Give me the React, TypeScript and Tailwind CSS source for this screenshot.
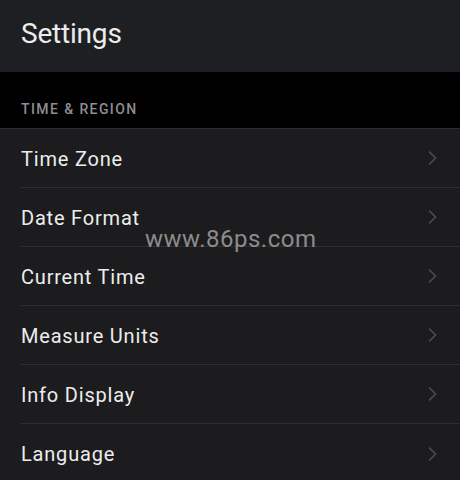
const items = ['Time Zone', 'Date Format', 'Current Time', 'Measure Units', 'Info Display', 'Language'];

function Chevron() {
  return (
    <svg width="12" height="16" viewBox="0 0 12 16" fill="none" className="text-[#4c4c4f]">
      <path d="M3 1.5 L9.5 8 L3 14.5" stroke="currentColor" strokeWidth="1.6" />
    </svg>
  );
}

export default function App() {
  return (
    <div
      className="relative w-[460px] h-[480px] overflow-hidden bg-[#1c1c1e]"
      style={{ fontFamily: 'Roboto, "Noto Sans", sans-serif' }}
    >
      {/* header */}
      <div className="h-[72px] flex items-center pl-[21px] bg-[#1e1f22]">
        <h1 className="text-[28px] text-[#ececec] font-normal tracking-[-0.2px] pb-[4px]">Settings</h1>
      </div>
      {/* section */}
      <div className="h-[57px] bg-black flex items-end pl-[21px] pb-[8px] border-b border-[#2f2f31]">
        <span className="text-[14px] tracking-[1.4px] text-[#8e8e92] font-medium">TIME &amp; REGION</span>
      </div>
      {/* rows */}
      <div className="flex flex-col">
        {items.map((item, i) => (
          <div key={item} className="pl-[21px]">
            <div
              className={
                'h-[59px] flex items-center justify-between pr-[22px] ' +
                (i < items.length - 1 ? 'border-b border-[#2f2f31]' : '')
              }
            >
              <span className="text-[20px] tracking-[0.8px] text-[#ededed] pt-[1px]">{item}</span>
              <Chevron />
            </div>
          </div>
        ))}
      </div>
      {/* watermark */}
      <div className="absolute left-[145px] top-[221px] text-[24px] text-[#8c8c8c] tracking-[0.5px]">www.86ps.com</div>
    </div>
  );
}
